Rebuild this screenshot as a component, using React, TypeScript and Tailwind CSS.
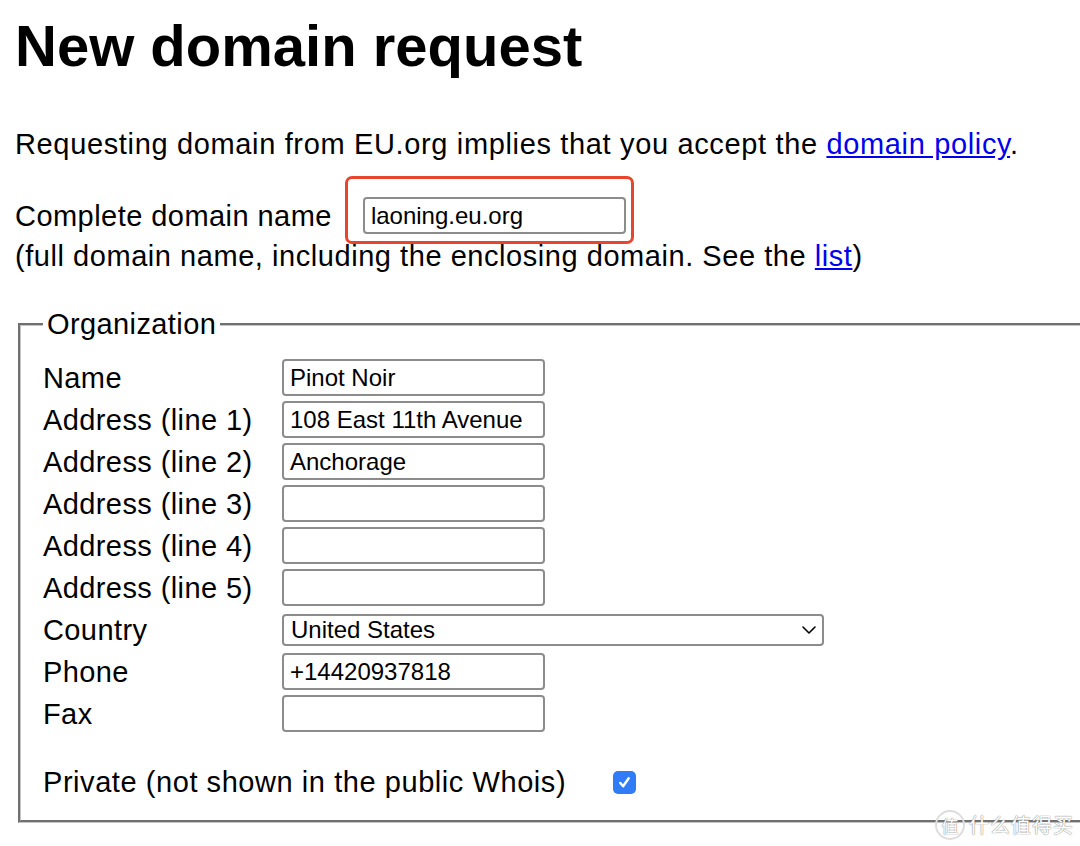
import { ChevronDown } from 'lucide-react';

const rows: { label: string; value: string }[] = [
    { label: 'Name', value: 'Pinot Noir' },
    { label: 'Address (line 1)', value: '108 East 11th Avenue' },
    { label: 'Address (line 2)', value: 'Anchorage' },
    { label: 'Address (line 3)', value: '' },
    { label: 'Address (line 4)', value: '' },
    { label: 'Address (line 5)', value: '' },
];

function TextBox({ value }: { value: string }) {
    return (
        <div className="w-[263px] h-[37px] border-[2px] border-[#8c8c8c] rounded-[4px] px-[6px] flex items-center text-[24px] leading-[28px] tracking-normal bg-white">
            {value}
        </div>
    );
}

export default function App() {
    return (
        <div className="relative w-[1080px] h-[846px] overflow-hidden bg-white text-black pl-[15px] text-[29px] leading-[32px] font-['Liberation_Sans',Arial,sans-serif]">
            <h1 className="mt-[13px] text-[58px] leading-[65px] font-bold">New domain request</h1>

            <p className="mt-[50px] tracking-[0.65px]">
                Requesting domain from EU.org implies that you accept the{' '}
                <a href="#" className="text-[#0000ee] underline">domain policy</a>.
            </p>

            {/* domain name */}
            <div className="mt-[37px] flex items-center h-[37px]">
                <span className="tracking-[0.45px]">Complete domain name</span>
                <div className="relative ml-[31px]">
                    <TextBox value="laoning.eu.org" />
                    <div className="absolute left-[-18px] right-[-8px] top-[-21px] bottom-[-10px] border-[3px] border-[#e8452e] rounded-[7px]" />
                </div>
            </div>
            <p className="mt-[6px] tracking-[0.55px]">
                (full domain name, including the enclosing domain. See the{' '}
                <a href="#" className="text-[#0000ee] underline">list</a>)
            </p>

            {/* Organization */}
            <fieldset className="mt-[36px] ml-[3px] w-[1100px] border-[3px] [border-style:groove] border-[#c4c4c4] pl-[22px] pb-[22px] tracking-[0.4px]">
                <legend className="px-[4px]">Organization</legend>
                <div className="pt-[19px] grid grid-cols-[239px_auto] auto-rows-[37px] gap-y-[5px] items-center">
                    {rows.map((r) => (
                        <div key={r.label} className="contents">
                            <span>{r.label}</span>
                            <TextBox value={r.value} />
                        </div>
                    ))}
                    <span>Country</span>
                    <div className="relative w-[542px] h-[32px] border-[2px] border-[#8c8c8c] rounded-[4px] pl-[7px] flex items-center text-[24px] leading-[28px] tracking-normal">
                        United States
                        <ChevronDown className="absolute right-[1px] top-[2px] w-[24px] h-[24px]" strokeWidth={1.6} />
                    </div>
                    <span>Phone</span>
                    <TextBox value="+14420937818" />
                    <span>Fax</span>
                    <TextBox value="" />
                </div>

                <div className="mt-[34px] flex items-center gap-[47px]">
                    <span className="tracking-[0.56px]">Private (not shown in the public Whois)</span>
                    <div className="w-[23px] h-[23px] rounded-[5px] bg-[#2f7cf6] flex items-center justify-center">
                        <svg viewBox="0 0 16 16" className="w-[15px] h-[15px]" fill="none" stroke="white" strokeWidth="2.6" strokeLinecap="round" strokeLinejoin="round">
                            <path d="M3.5 8.5 L6.5 12 L12.5 3.5" />
                        </svg>
                    </div>
                </div>
            </fieldset>

            {/* watermark */}
            <div className="absolute right-[6px] bottom-[6px] flex items-center gap-[4px] text-white font-['Noto_Sans_CJK_SC',sans-serif] [text-shadow:0_0_1px_#888,0_0_1px_#888]">
                <span className="w-[30px] h-[30px] rounded-full border-[2px] border-[#ddd] flex items-center justify-center text-[17px] leading-none">值</span>
                <span className="text-[20px] leading-none tracking-[1px]">什么值得买</span>
            </div>
        </div>
    );
}
